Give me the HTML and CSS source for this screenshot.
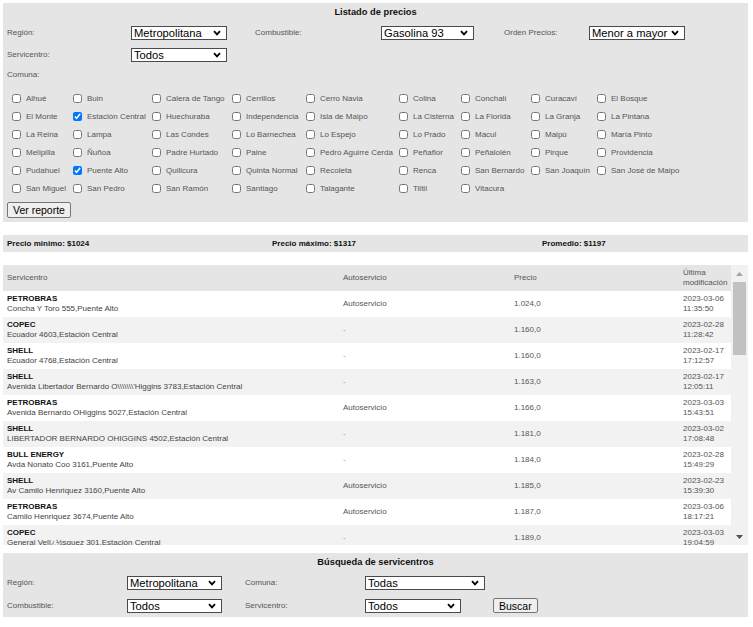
FILE: index.html
```html
<!DOCTYPE html>
<html lang="es">
<head>
<meta charset="utf-8">
<title>Listado de precios</title>
<link rel="stylesheet" href="styles.css">
</head>
<body>
<section class="panel report">
  <h1 class="panel-title">Listado de precios</h1>
  <div class="form form-top">
    <label class="lbl">Región:</label>
    <span class="sel w96"><select><option>Metropolitana</option></select><svg class="chev" viewBox="0 0 8 6"><path d="M1 1.2 4 4.4 7 1.2"/></svg></span>
    <label class="lbl">Combustible:</label>
    <span class="sel w93"><select><option>Gasolina 93</option></select><svg class="chev" viewBox="0 0 8 6"><path d="M1 1.2 4 4.4 7 1.2"/></svg></span>
    <label class="lbl">Orden Precios:</label>
    <span class="sel w96"><select><option>Menor a mayor</option></select><svg class="chev" viewBox="0 0 8 6"><path d="M1 1.2 4 4.4 7 1.2"/></svg></span>
    <label class="lbl">Servicentro:</label>
    <span class="sel w96"><select><option>Todos</option></select><svg class="chev" viewBox="0 0 8 6"><path d="M1 1.2 4 4.4 7 1.2"/></svg></span>
  </div>
  <div class="lbl comuna">Comuna:</div>
  <div class="comunas">
    <label class="opt"><input type="checkbox">Alhué</label>
    <label class="opt"><input type="checkbox">Buin</label>
    <label class="opt"><input type="checkbox">Calera de Tango</label>
    <label class="opt"><input type="checkbox">Cerrillos</label>
    <label class="opt"><input type="checkbox">Cerro Navia</label>
    <label class="opt"><input type="checkbox">Colina</label>
    <label class="opt"><input type="checkbox">Conchalí</label>
    <label class="opt"><input type="checkbox">Curacaví</label>
    <label class="opt"><input type="checkbox">El Bosque</label>
    <label class="opt"><input type="checkbox">El Monte</label>
    <label class="opt"><input type="checkbox" checked>Estación Central</label>
    <label class="opt"><input type="checkbox">Huechuraba</label>
    <label class="opt"><input type="checkbox">Independencia</label>
    <label class="opt"><input type="checkbox">Isla de Maipo</label>
    <label class="opt"><input type="checkbox">La Cisterna</label>
    <label class="opt"><input type="checkbox">La Florida</label>
    <label class="opt"><input type="checkbox">La Granja</label>
    <label class="opt"><input type="checkbox">La Pintana</label>
    <label class="opt"><input type="checkbox">La Reina</label>
    <label class="opt"><input type="checkbox">Lampa</label>
    <label class="opt"><input type="checkbox">Las Condes</label>
    <label class="opt"><input type="checkbox">Lo Barnechea</label>
    <label class="opt"><input type="checkbox">Lo Espejo</label>
    <label class="opt"><input type="checkbox">Lo Prado</label>
    <label class="opt"><input type="checkbox">Macul</label>
    <label class="opt"><input type="checkbox">Maipú</label>
    <label class="opt"><input type="checkbox">María Pinto</label>
    <label class="opt"><input type="checkbox">Melipilla</label>
    <label class="opt"><input type="checkbox">Ñuñoa</label>
    <label class="opt"><input type="checkbox">Padre Hurtado</label>
    <label class="opt"><input type="checkbox">Paine</label>
    <label class="opt"><input type="checkbox">Pedro Aguirre Cerda</label>
    <label class="opt"><input type="checkbox">Peñaflor</label>
    <label class="opt"><input type="checkbox">Peñalolén</label>
    <label class="opt"><input type="checkbox">Pirque</label>
    <label class="opt"><input type="checkbox">Providencia</label>
    <label class="opt"><input type="checkbox">Pudahuel</label>
    <label class="opt"><input type="checkbox" checked>Puente Alto</label>
    <label class="opt"><input type="checkbox">Quilicura</label>
    <label class="opt"><input type="checkbox">Quinta Normal</label>
    <label class="opt"><input type="checkbox">Recoleta</label>
    <label class="opt"><input type="checkbox">Renca</label>
    <label class="opt"><input type="checkbox">San Bernardo</label>
    <label class="opt"><input type="checkbox">San Joaquín</label>
    <label class="opt"><input type="checkbox">San José de Maipo</label>
    <label class="opt"><input type="checkbox">San Miguel</label>
    <label class="opt"><input type="checkbox">San Pedro</label>
    <label class="opt"><input type="checkbox">San Ramón</label>
    <label class="opt"><input type="checkbox">Santiago</label>
    <label class="opt"><input type="checkbox">Talagante</label>
    <label class="opt"><input type="checkbox">Tiltil</label>
    <label class="opt"><input type="checkbox">Vitacura</label>
  </div>
  <button class="btn btn-report">Ver reporte</button>
</section>

<div class="stats">
  <span>Precio minimo: $1024</span>
  <span>Precio máximo: $1317</span>
  <span>Promedio: $1197</span>
</div>

<div class="results">
  <div class="table-wrap">
    <table>
      <thead>
        <tr>
          <th class="c-name">Servicentro</th>
          <th class="c-auto">Autoservicio</th>
          <th class="c-price">Precio</th>
          <th class="c-date">Última modificación</th>
        </tr>
      </thead>
      <tbody>
        <tr><td><b>PETROBRAS</b><br><span class="addr">Concha Y Toro 555,Puente Alto</span></td><td>Autoservicio</td><td>1.024,0</td><td>2023-03-06 11:35:50</td></tr>
        <tr><td><b>COPEC</b><br><span class="addr">Ecuador 4603,Estación Central</span></td><td class="dash">-</td><td>1.160,0</td><td>2023-02-28 11:28:42</td></tr>
        <tr><td><b>SHELL</b><br><span class="addr">Ecuador 4768,Estación Central</span></td><td class="dash">-</td><td>1.160,0</td><td>2023-02-17 17:12:57</td></tr>
        <tr><td><b>SHELL</b><br><span class="addr">Avenida Libertador Bernardo O\\\\\\\'Higgins 3783,Estación Central</span></td><td class="dash">-</td><td>1.163,0</td><td>2023-02-17 12:05:11</td></tr>
        <tr><td><b>PETROBRAS</b><br><span class="addr">Avenida Bernardo OHiggins 5027,Estación Central</span></td><td>Autoservicio</td><td>1.166,0</td><td>2023-03-03 15:43:51</td></tr>
        <tr><td><b>SHELL</b><br><span class="addr">LIBERTADOR BERNARDO OHIGGINS 4502,Estación Central</span></td><td class="dash">-</td><td>1.181,0</td><td>2023-03-02 17:08:48</td></tr>
        <tr><td><b>BULL ENERGY</b><br><span class="addr">Avda Nonato Coo 3161,Puente Alto</span></td><td class="dash">-</td><td>1.184,0</td><td>2023-02-28 15:49:29</td></tr>
        <tr><td><b>SHELL</b><br><span class="addr">Av Camilo Henriquez 3160,Puente Alto</span></td><td>Autoservicio</td><td>1.185,0</td><td>2023-02-23 15:39:30</td></tr>
        <tr><td><b>PETROBRAS</b><br><span class="addr">Camilo Henriquez 3674,Puente Alto</span></td><td>Autoservicio</td><td>1.187,0</td><td>2023-03-06 18:17:21</td></tr>
        <tr><td><b>COPEC</b><br><span class="addr">General Velï¿½squez 301,Estación Central</span></td><td class="dash">-</td><td>1.189,0</td><td>2023-03-03 19:04:59</td></tr>
      </tbody>
    </table>
  </div>
  <div class="vscroll" aria-hidden="true">
    <div class="sb-btn sb-up"><svg viewBox="0 0 7 4"><polygon points="0,4 3.5,0 7,4"/></svg></div>
    <div class="sb-thumb"></div>
    <div class="sb-track"></div>
    <div class="sb-btn sb-down"><svg viewBox="0 0 7 4"><polygon points="0,0 3.5,4 7,0"/></svg></div>
  </div>
</div>

<section class="panel search">
  <h2 class="panel-title">Búsqueda de servicentros</h2>
  <div class="form form-bottom">
    <label class="lbl">Región:</label>
    <span class="sel w95"><select><option>Metropolitana</option></select><svg class="chev" viewBox="0 0 8 6"><path d="M1 1.2 4 4.4 7 1.2"/></svg></span>
    <label class="lbl">Comuna:</label>
    <span class="sel w120"><select><option>Todas</option></select><svg class="chev" viewBox="0 0 8 6"><path d="M1 1.2 4 4.4 7 1.2"/></svg></span>
    <label class="lbl">Combustible:</label>
    <span class="sel w95"><select><option>Todos</option></select><svg class="chev" viewBox="0 0 8 6"><path d="M1 1.2 4 4.4 7 1.2"/></svg></span>
    <label class="lbl">Servicentro:</label>
    <div class="inline">
      <span class="sel w96"><select><option>Todos</option></select><svg class="chev" viewBox="0 0 8 6"><path d="M1 1.2 4 4.4 7 1.2"/></svg></span>
      <button class="btn btn-search">Buscar</button>
    </div>
  </div>
</section>
</body>
</html>
```

FILE: styles.css
```css
* {
  box-sizing: border-box;
}

body {
  margin: 3px 5px 3px 3px;
  font-family: "Liberation Sans", Arial, sans-serif;
  color: #222;
  background: #fff;
}

.panel {
  background: #e5e5e5;
  padding: 3px 4px 4px;
}

.panel-title {
  margin: 0;
  font-size: 9.3px;
  line-height: 12px;
  font-weight: bold;
  text-align: center;
  color: #111;
}

.form {
  display: grid;
  row-gap: 8px;
  align-items: center;
  margin-top: 8px;
}

.form-top {
  grid-template-columns: 124px 124px 126px 123px 85px auto;
}

.form-bottom {
  grid-template-columns: 120px 118px 120px auto;
}

.lbl {
  font-size: 8px;
  line-height: 12px;
  color: #555;
}

.sel {
  display: flex;
  align-items: center;
  height: 14px;
  background: #fff;
  border: 1px solid #4a4a4a;
  padding: 0 5px 0 2px;
}

.sel select {
  -webkit-appearance: none;
  appearance: none;
  border: 0;
  background: transparent;
  font: 11.2px "Liberation Sans", Arial, sans-serif;
  color: #000;
  padding: 0;
  margin: 0;
  height: 12px;
  line-height: 12px;
  flex: 1;
  min-width: 0;
  outline: none;
}

.chev {
  width: 8px;
  height: 6px;
  flex: none;
  fill: none;
  stroke: #000;
  stroke-width: 1.8;
}

.w93 { width: 93px; }
.w95 { width: 95px; }
.w96 { width: 96px; }
.w120 { width: 120px; }

.comuna {
  margin-top: 7px;
}

.comunas {
  display: grid;
  grid-template-columns: 61px 79px 80px 74px 93px 62px 70px 66px auto;
  grid-auto-rows: 18px;
  margin: 8px 0 0 5px;
}

.opt {
  display: flex;
  align-items: center;
  gap: 5px;
  font-size: 8px;
  color: #555;
  white-space: nowrap;
}

.opt input {
  width: 9px;
  height: 9px;
  margin: 0;
  flex: none;
}

.btn {
  display: block;
  height: 16px;
  padding: 0 5px;
  font: 10.5px "Liberation Sans", Arial, sans-serif;
  color: #000;
  background: #efefef;
  border: 1px solid #767676;
  border-radius: 2px;
}

.btn-report {
  margin-top: 5px;
}

.btn-search {
  height: 15px;
}

.inline {
  display: flex;
  align-items: center;
  gap: 32px;
}

.stats {
  margin-top: 13px;
  height: 17px;
  background: #e5e5e5;
  display: grid;
  grid-template-columns: 265px 270px auto;
  align-items: center;
  font-size: 8px;
  font-weight: bold;
  color: #111;
}

.stats span {
  padding-left: 4px;
}

.results {
  margin-top: 13px;
  height: 280px;
  display: flex;
}

.table-wrap {
  width: 728px;
  overflow: hidden;
}

table {
  width: 728px;
  border-collapse: collapse;
  table-layout: fixed;
  font-size: 8px;
  line-height: 10px;
}

th {
  background: #e5e5e5;
  height: 26px;
  padding: 0 4px;
  font-weight: normal;
  color: #555;
  text-align: left;
  vertical-align: middle;
}

.c-name { width: 336px; }
.c-auto { width: 171px; }
.c-price { width: 169px; }
.c-date { width: 52px; }

td {
  height: 26px;
  padding: 3px 4px;
  color: #555;
  vertical-align: middle;
  background: #fff;
}

tbody tr:nth-child(even) td {
  background: #f2f2f2;
}

td b {
  color: #111;
}

.addr {
  color: #444;
}

.dash {
  color: #999;
}

.vscroll {
  width: 17px;
  background: #f1f1f1;
  display: flex;
  flex-direction: column;
}

.sb-btn {
  height: 17px;
  display: flex;
  align-items: center;
  justify-content: center;
  flex: none;
}

.sb-btn svg {
  width: 7px;
  height: 4px;
}

.sb-up svg { fill: #a3a3a3; }
.sb-down svg { fill: #505050; }

.sb-thumb {
  height: 73px;
  margin: 0 2px;
  background: #c1c1c1;
  flex: none;
}

.sb-track {
  flex: 1;
}

.search {
  margin-top: 8px;
}
```
